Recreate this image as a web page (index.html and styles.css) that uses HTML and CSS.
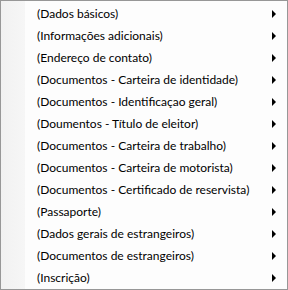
FILE: index.html
```html
<!DOCTYPE html>
<html lang="pt">
<head>
    <meta charset="UTF-8">
    <title>Menu</title>
    <link rel="stylesheet" href="styles.css">
</head>
<body>
    <div class="menu">
        <div class="item"><span class="label">(Dados básicos)</span><span class="arrow"></span></div>
        <div class="item"><span class="label">(Informações adicionais)</span><span class="arrow"></span></div>
        <div class="item"><span class="label">(Endereço de contato)</span><span class="arrow"></span></div>
        <div class="item"><span class="label">(Documentos - Carteira de identidade)</span><span class="arrow"></span></div>
        <div class="item"><span class="label">(Documentos - Identificaçao geral)</span><span class="arrow"></span></div>
        <div class="item"><span class="label">(Doumentos - Título de eleitor)</span><span class="arrow"></span></div>
        <div class="item"><span class="label">(Documentos - Carteira de trabalho)</span><span class="arrow"></span></div>
        <div class="item"><span class="label">(Documentos - Carteira de motorista)</span><span class="arrow"></span></div>
        <div class="item"><span class="label">(Documentos - Certificado de reservista)</span><span class="arrow"></span></div>
        <div class="item"><span class="label">(Passaporte)</span><span class="arrow"></span></div>
        <div class="item"><span class="label">(Dados gerais de estrangeiros)</span><span class="arrow"></span></div>
        <div class="item"><span class="label">(Documentos de estrangeiros)</span><span class="arrow"></span></div>
        <div class="item"><span class="label">(Inscrição)</span><span class="arrow"></span></div>
    </div>
</body>
</html>
```

FILE: styles.css
```css
body {
    margin: 0;
    font-family: Lato, "Noto Sans", sans-serif;
    font-size: 12px;
    color: #000;
    background: #fff;
}

.menu {
    width: 288px;
    height: 290px;
    border: 1px solid #979797;
    padding: 2px 0 0 0;
    box-sizing: border-box;
    background: linear-gradient(to right, #f1f1f1 0, #f6f6f6 24px, #fdfdfd 24px, #fdfdfd 100%);
}

.item {
    display: flex;
    align-items: center;
    height: 22px;
    padding-left: 36px;
    padding-right: 11px;
}

.label {
    flex: 1;
    white-space: nowrap;
    padding-bottom: 2px;
}

.arrow {
    width: 0;
    height: 0;
    border-top: 4px solid transparent;
    border-bottom: 4px solid transparent;
    border-left: 4px solid #000;
}
```
